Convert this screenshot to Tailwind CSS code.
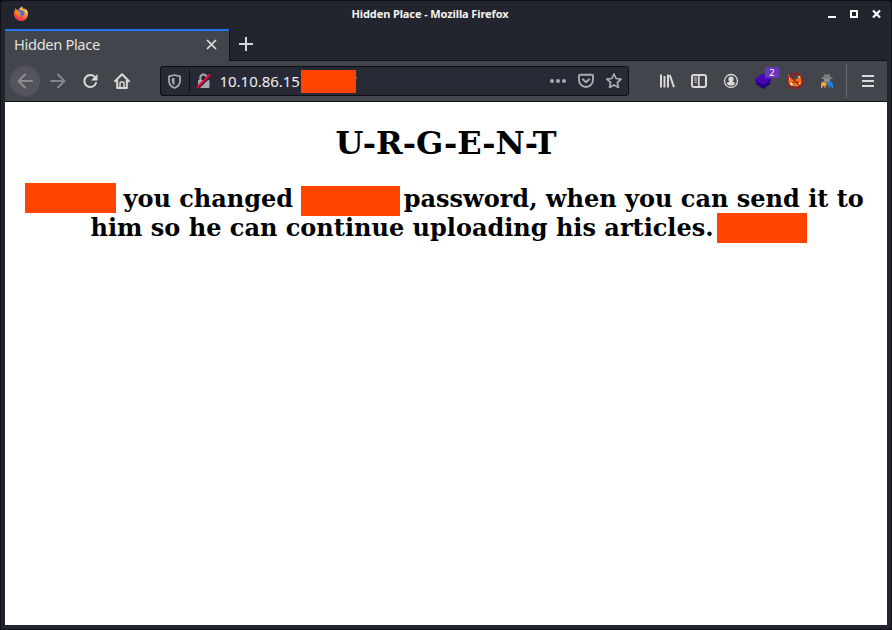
<!DOCTYPE html>
<html lang="en">
<head>
<meta charset="utf-8">
<title>Hidden Place</title>
<script src="https://cdn.jsdelivr.net/npm/@tailwindcss/browser@4"></script>
</head>
<body class="bg-[#101116]">
<div class="w-[892px] h-[630px] bg-[#23252e] border border-[#101116] rounded-t-[5px] px-1 pb-1 flex flex-col overflow-hidden font-['Noto_Sans',sans-serif]">
  <!-- Title bar -->
  <header class="h-7 shrink-0 grid grid-cols-[1fr_auto_1fr] items-center">
    <svg class="ml-2 -mt-0.5" width="16" height="16" viewBox="0 0 16 16">
      <defs><linearGradient id="fx" x1=".8" y1="0" x2=".3" y2="1"><stop offset="0" stop-color="#ffe14d"/><stop offset=".45" stop-color="#ff8a2a"/><stop offset="1" stop-color="#f0244f"/></linearGradient></defs>
      <path d="M1.700 4.500 2.700 2.200 4 4.200l2-.7C6.500 2 7.700 1 9 .5L10 2.500c1.500.6 2.500 1.500 3 2.500l.2-1.700c1.500 1.700 2 3.600 1.800 5.400-.4 3.700-3.300 6.300-7 6.300s-7-3-7-6.700c0-1.600.3-3 .7-3.800Z" fill="url(#fx)"/>
      <path d="M5 4.300 7.500 3.800 11.300 5.500Q12 9 9.500 10.500 6 11 4.700 8.500Z" fill="#3f72e0"/>
      <path d="M3 5.500c1.300-.8 2.500-.8 3.500.2l1.800.4c-.2 1-.9 1.300-1.800 1.500-.2 1.300 1 1.700 2.500 1.400-1.500 2-5 1.300-6-1.200Z" fill="#ff8529"/>
      <path d="M9 .6c2.500 2 4.200 4.400 3.500 8.400 1.600-1.500 1.800-3.400 1-4.700C12.500 3 10.500 2.500 9 .6Z" fill="#ffcf45"/>
    </svg>
    <h1 class="text-[11px] leading-4 font-bold text-[#f4f4f4] whitespace-nowrap -ml-[32px] -mt-0.5 tracking-[-0.1px]">Hidden Place - Mozilla Firefox</h1>
    <svg class="justify-self-end mr-[6px] -mt-0.5" width="54" height="10" viewBox="0 0 54 10" shape-rendering="crispEdges">
      <rect x="1" y="7" width="8" height="2" fill="#fff"/>
      <rect x="24" y="2" width="6" height="6" fill="none" stroke="#fff" stroke-width="2"/>
      <path d="m46 1.500 7 7m0-7-7 7" fill="none" stroke="#fff" stroke-width="2.200" shape-rendering="auto"/>
    </svg>
  </header>

  <!-- Tabs -->
  <nav class="h-8 shrink-0 flex">
    <div class="w-[224px] flex items-center justify-between bg-[#43454c] border-t-2 border-[#2472f2] pl-[9px] pr-3">
      <span class="text-[14.700px] leading-5 tracking-[-0.36px] -mt-[5px] text-[#e0e0df]">Hidden Place</span>
      <svg class="-mt-[3px]" width="11" height="11" viewBox="0 0 11 11" fill="none" stroke="#e0e0df" stroke-width="1.700"><path d="m1 1 9 9m0-9-9 9"/></svg>
    </div>
    <div class="flex-1 border-l border-b border-[#101116] pl-2 pt-2">
      <svg width="15" height="15" viewBox="0 0 15 15" fill="none" stroke="#d6d6da" stroke-width="2"><path d="M8 0v14M1 7h14"/></svg>
    </div>
  </nav>

  <!-- Toolbar -->
  <div class="h-[41px] shrink-0 flex items-center bg-[#43454c] border-b border-[#101116] pl-1 text-[#d9d9d6]">
    <div class="size-8 shrink-0 rounded-full bg-[#54545c] border border-[#4b4c53] grid place-items-center text-[#8b8b90]">
      <svg width="16" height="16" viewBox="0 0 16 16" fill="none" stroke="currentColor" stroke-width="2" stroke-linecap="round" stroke-linejoin="round"><path d="M15 8H1.500M8 1.500 1.500 8 8 14.500"/></svg>
    </div>
    <svg class="ml-[9px] shrink-0 text-[#85868b]" width="16" height="16" viewBox="0 0 16 16" fill="none" stroke="currentColor" stroke-width="2" stroke-linecap="round" stroke-linejoin="round"><path d="M1 8h13.500M8 1.500 14.500 8 8 14.500"/></svg>
    <svg class="ml-4 shrink-0" width="16" height="16" viewBox="0 0 16 16" fill="none" stroke="currentColor" stroke-width="2"><path d="M13.200 4.500A6 6 0 1 0 14 10" stroke-linecap="round"/><path d="M15.500 1v6.500H9Z" fill="currentColor" stroke="none"/></svg>
    <svg class="ml-4 shrink-0" width="16" height="16" viewBox="0 0 16 16" fill="none" stroke="currentColor" stroke-width="2" stroke-linecap="round" stroke-linejoin="round"><path d="M1 8.300 8 1.300l7 7M3.200 7.500V15h9.600V7.500"/><path d="M6 15v-5q0-1 1-1h2q1 0 1 1v5" stroke-width="1.500"/></svg>

    <!-- Address field -->
    <div class="ml-[30px] w-[469px] h-[30px] shrink-0 flex items-center rounded-[3px] border border-[#0d0e12] bg-[#272934] text-[#a9aaaf]">
      <svg class="ml-[7px]" width="13" height="15" viewBox="0 0 13 15"><path d="M6.500 1 12 2.400V6.500c0 4-2.300 6.300-5.500 7.500C3.300 12.800 1 10.500 1 6.500V2.400Z" fill="none" stroke="currentColor" stroke-width="1.800" stroke-linejoin="round"/><path d="M6.500 3.800v7.400C4.500 10 3.800 8.500 3.800 6.500V4.400Z" fill="currentColor"/></svg>
      <span class="ml-2 w-px h-[22px] bg-[#0d0e12]"></span>
      <svg class="ml-[6px]" width="15" height="16" viewBox="0 0 15 16"><path d="M4.300 7.500V4.600a3.200 3.200 0 0 1 6.400 0v2.900" fill="none" stroke="currentColor" stroke-width="2"/><rect x="2" y="7" width="11.500" height="8" rx="1" fill="currentColor"/><path d="M2 15.500 15 2.500" stroke="#272934" stroke-width="2"/><path d="M.8 14.800 14 1.500" stroke="#f5003d" stroke-width="2"/></svg>
      <span class="ml-[8.500px] w-[81.500px] text-[15px] leading-5 tracking-[-0.03px] text-[#f0f0f0]">10.10.86.15</span>
      <span class="relative z-10 w-[55px] h-[23px] bg-[#ff4400] shrink-0"></span>
      <span class="-ml-[4.500px] text-[15px] leading-5 text-[#85868b]">/</span>
      <span class="ml-auto mr-[6px] flex items-center">
        <svg class="mr-3" width="16" height="6" viewBox="0 0 16 6" fill="currentColor"><circle cx="2" cy="3" r="2"/><circle cx="8" cy="3" r="2"/><circle cx="14" cy="3" r="2"/></svg>
        <svg class="mr-3" width="16" height="16" viewBox="0 0 16 16" fill="none" stroke="currentColor" stroke-width="1.900" stroke-linecap="round" stroke-linejoin="round"><path d="M2 1.800h12q1 0 1 1V7A7 7 0 0 1 1 7V2.800q0-1 1-1Z"/><path d="m4.800 6.300 3.200 3 3.200-3"/></svg>
        <svg width="16" height="16" viewBox="0 0 16 16" fill="none" stroke="currentColor" stroke-width="1.700" stroke-linejoin="round"><path d="m8 1 2.100 4.500 5 .6-3.700 3.400 1 4.900L8 12l-4.400 2.400 1-4.900L.9 6.100l5-.6Z"/></svg>
      </span>
    </div>

    <svg class="ml-[30px] shrink-0" width="16" height="16" viewBox="0 0 16 16" fill="none" stroke="currentColor" stroke-width="2"><path d="M2 1.500v13M5.500 3v11.500M9 1.500v13"/><path d="m10.800 2.200 4.200 12"/></svg>
    <svg class="ml-4 shrink-0" width="16" height="16" viewBox="0 0 16 16" fill="none" stroke="currentColor"><rect x="1" y="2" width="14" height="12" rx="2" stroke-width="2"/><path d="M7.800 2v12" stroke-width="1.700"/><path d="M3 4.800h3M3 7h3M3.500 9.200H6"/></svg>
    <svg class="ml-4 shrink-0" width="16" height="16" viewBox="0 0 16 16"><circle cx="8" cy="8" r="6.500" fill="none" stroke="currentColor" stroke-width="1.300"/><path d="M8 3.600a2.600 2.600 0 0 1 2.600 2.700c0 1.100-.5 1.800-1.100 2.500 1.300.3 2.500.7 2.700 1.600A5 5 0 0 1 8 12.700a5 5 0 0 1-4.200-2.300c.2-.9 1.400-1.300 2.700-1.600-.6-.7-1.100-1.400-1.100-2.500A2.600 2.600 0 0 1 8 3.600Z" fill="currentColor"/></svg>
    <div class="relative ml-4 shrink-0">
      <svg width="16" height="16" viewBox="0 0 16 16"><path d="M0 10.500 8 5l8 5.500L8 16Z" fill="#25007e"/><path d="M0 6 8 .5 16 6v2L8 13.500 0 8Z" fill="#31009a"/><path d="M0 6 8 .5 16 6 8 11.500Z" fill="#4a08b5"/></svg>
      <span class="absolute left-[10px] -top-[6px] w-[14px] h-[11px] rounded-[1px] bg-[#6a36bd] text-white text-[9.500px] leading-[11px] text-center">2</span>
    </div>
    <svg class="ml-4 shrink-0" width="16" height="16" viewBox="0 0 16 16"><path d="M2 4.500 6 5.500 8 7l2.500-2L14 3l1 5-1 4-5 1.500-6-1-2-4Z" fill="#e07a20"/><path d="m3 9.500 2 .5 1 2-2 .5Zm8 1 2.500-1-1 3-2 .5Z" fill="#fff0db"/><path d="m1.500 2 2 1L2 8Zm9 1.500L13.500 2v3Z" fill="#f5e2c4"/><circle cx="6.500" cy="9.500" r=".8" fill="#412417"/><circle cx="10.500" cy="9" r=".8" fill="#412417"/><circle cx="8" cy="8" r="7.300" fill="none" stroke="#c90808" stroke-width="1.200"/><path d="m3 3 10 10" stroke="#c90808" stroke-width="1.300"/></svg>
    <svg class="ml-4 shrink-0" width="16" height="16" viewBox="0 0 16 16"><path d="M4.500 4 5.300 1 8 1.500 10.700 1l.8 3 2 .6V6h-11V4.600Z" fill="#7b7d80"/><path d="M5 6h6v2L8 10 5 8Z" fill="#8d8f91"/><path d="M2 15v-3.500Q2 9 4.500 8.500L7.500 10v2.500H6.500V15h-1v-2h-2v2Z" fill="#ffa03a"/><path d="M14 15v-3.500Q14 9 11.500 8.500L8.500 10v2.500h1V15h1v-2h2v2Z" fill="#1688e5"/></svg>
    <span class="ml-[11px] h-[34px] w-px bg-[#6b6c70]"></span>
    <svg class="ml-[15px] shrink-0" width="12" height="14" viewBox="0 0 12 14" fill="none" stroke="currentColor" stroke-width="2"><path d="M0 2h12M0 7h12M0 12h12"/></svg>
  </div>

  <!-- Page -->
  <main class="flex-1 bg-white text-black font-bold font-['DejaVu_Serif',serif]">
    <h1 class="pt-[22px] text-center text-[32px] leading-[39px]">U-R-G-E-N-T</h1>
    <div class="mt-[21px] text-2xl leading-[29px] whitespace-nowrap">
      <p class="flex h-[29px] pl-5">
        <span class="w-[91px] h-[30px] -mt-px bg-[#ff4400]"></span>
        <span class="ml-[7.500px] w-[177.500px]">you changed</span>
        <span class="w-[99px] h-[30px] mt-[2px] bg-[#ff4400]"></span>
        <span class="ml-[3.700px]">password, when you can send it to</span>
      </p>
      <p class="flex h-[29px] pl-[85.500px]">
        <span class="w-[626.500px]">him so he can continue uploading his articles.</span>
        <span class="w-[90px] h-[30px] bg-[#ff4400]"></span>
      </p>
    </div>
  </main>
</div>
</body>
</html>
